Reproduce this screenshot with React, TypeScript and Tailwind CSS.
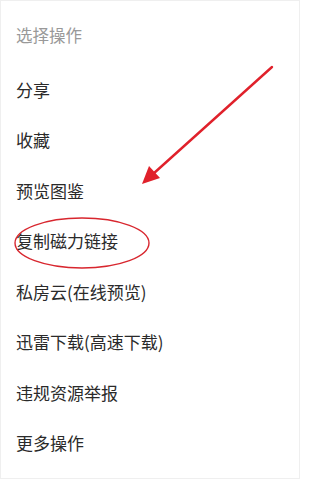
const items = [
  "分享",
  "收藏",
  "预览图鉴",
  "复制磁力链接",
  "私房云(在线预览)",
  "迅雷下载(高速下载)",
  "违规资源举报",
  "更多操作",
];

export default function App() {
  return (
    <div
      className="relative h-[479px] w-[300px] overflow-hidden border border-[#efefef] bg-white pt-[9px]"
      style={{ fontFamily: '"Noto Sans CJK SC", "Noto Sans", sans-serif' }}
    >
      {/* header */}
      <div className="flex h-[50px] items-center px-[15px] text-[16.5px] text-[#999999]">
        选择操作
      </div>

      {/* actions */}
      <ul className="mt-[4px]">
        {items.map((label) => (
          <li
            key={label}
            className="flex h-[50.5px] items-center px-[15px] text-[17px] text-[#2a2a2a]"
          >
            {label}
          </li>
        ))}
      </ul>

      {/* red annotation: ellipse + arrow */}
      <svg
        className="pointer-events-none absolute left-0 top-0"
        width="300"
        height="479"
        viewBox="0 0 300 479"
      >
        <ellipse cx="81" cy="242" rx="67" ry="25" fill="none" stroke="#d8262e" strokeWidth="1.4" />
        <line x1="271" y1="66" x2="152" y2="173" stroke="#e0212b" strokeWidth="2.4" strokeLinecap="round" />
        <polygon points="141,183 148,165 159,177" fill="#e0212b" />
      </svg>
    </div>
  );
}
